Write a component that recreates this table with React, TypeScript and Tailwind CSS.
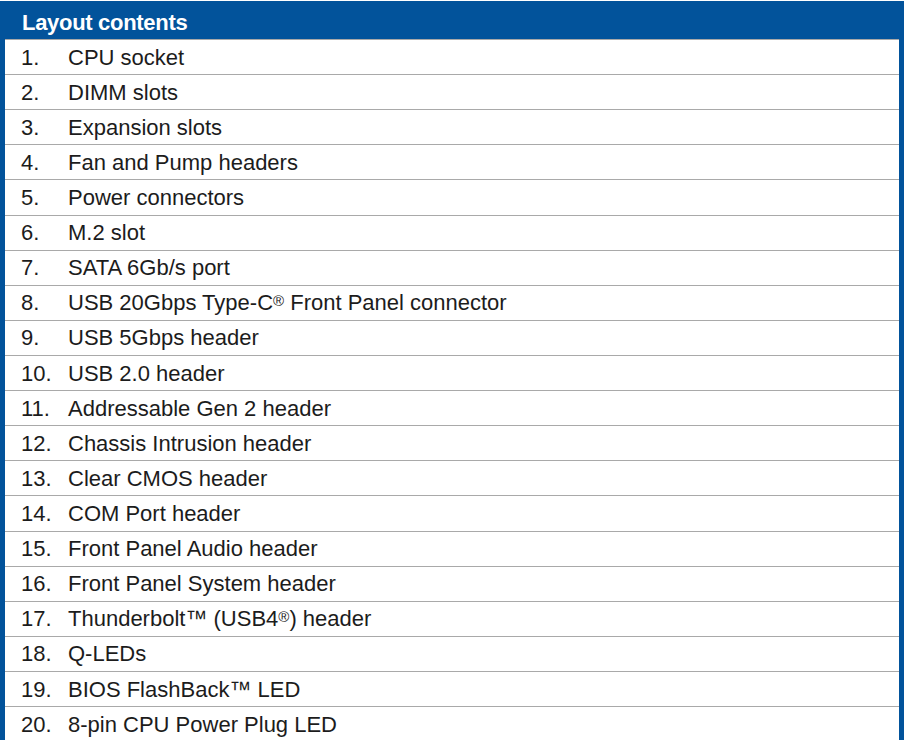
const items = [
  'CPU socket',
  'DIMM slots',
  'Expansion slots',
  'Fan and Pump headers',
  'Power connectors',
  'M.2 slot',
  'SATA 6Gb/s port',
  'USB 20Gbps Type-C® Front Panel connector',
  'USB 5Gbps header',
  'USB 2.0 header',
  'Addressable Gen 2 header',
  'Chassis Intrusion header',
  'Clear CMOS header',
  'COM Port header',
  'Front Panel Audio header',
  'Front Panel System header',
  'Thunderbolt™ (USB4®) header',
  'Q-LEDs',
  'BIOS FlashBack™ LED',
  '8-pin CPU Power Plug LED',
];

// small raised ® like the manual's typesetting
function Label({ text }: { text: string }) {
  const parts = text.split('®');
  return (
    <span>
      {parts.map((p, i) => (
        <span key={i}>
          {p}
          {i < parts.length - 1 && (
            <sup className="text-[15px] relative -top-[4px]">®</sup>
          )}
        </span>
      ))}
    </span>
  );
}

export default function App() {
  return (
    <div className="w-[904px] h-[740px] overflow-hidden bg-white pt-px font-['Liberation_Sans',Arial,sans-serif]">
      <div className="h-[38px] bg-[#02539b] flex items-center pl-[22px] pt-[4px]">
        <span className="text-white font-bold text-[22px] tracking-[-0.3px]">Layout contents</span>
      </div>
      <div className="border-x-[5px] border-[#02539b]">
        {items.map((item, i) => (
          <div
            key={i}
            className="h-[35.12px] border-t border-[#a9a9a9] flex items-center text-[22px] text-[#1c1c1c]"
          >
            <span className="w-[63px] pl-[16px]">{i + 1}.</span>
            <Label text={item} />
          </div>
        ))}
      </div>
    </div>
  );
}
